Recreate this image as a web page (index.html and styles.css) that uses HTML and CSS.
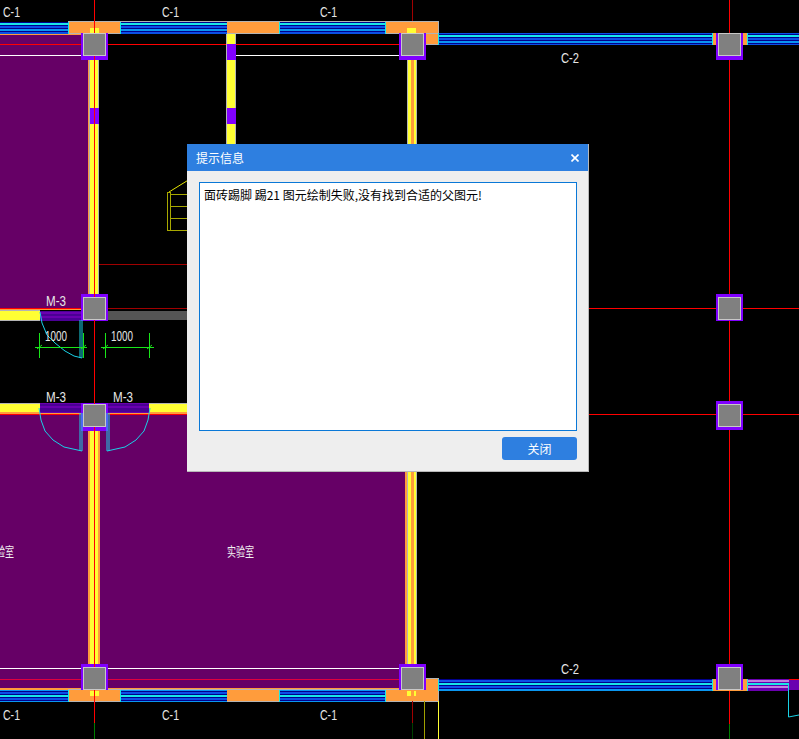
FILE: index.html
```html
<!DOCTYPE html>
<html lang="zh">
<head>
<meta charset="utf-8">
<title>提示信息</title>
<link rel="stylesheet" href="styles.css">
</head>
<body>
<main class="stage">
<svg class="cad" width="799" height="739" viewBox="0 0 799 739" shape-rendering="crispEdges">
  <defs>
    <pattern id="win" width="8" height="12" patternUnits="userSpaceOnUse">
      <rect class="dk" width="8" height="12"/>
      <rect class="cy" width="8" height="1"/>
      <rect class="bl" y="2" width="8" height="2"/>
      <rect class="lb" y="5" width="8" height="2"/>
      <rect class="bl" y="8" width="8" height="2"/>
      <rect class="cy" y="11" width="8" height="1"/>
    </pattern>
    <pattern id="door" width="8" height="10" patternUnits="userSpaceOnUse">
      <rect class="dp" width="8" height="10"/>
      <rect class="vi" y="2" width="8" height="2"/>
      <rect class="vi" y="6" width="8" height="2"/>
    </pattern>
    <pattern id="pinkwin" width="8" height="12" patternUnits="userSpaceOnUse">
      <rect class="vi" width="8" height="12"/>
      <rect class="cy" width="8" height="1"/>
      <rect class="pk" y="2" width="8" height="2"/>
      <rect class="pk" y="8" width="8" height="2"/>
      <rect class="cy" y="11" width="8" height="1"/>
    </pattern>
    <g id="col">
      <rect class="gc" x="0.5" y="0.5" width="22" height="22"/>
    </g>
  </defs>

  <!-- rooms -->
  <rect class="pu" x="0" y="35" width="88" height="273"/>
  <rect class="pu" x="0" y="415" width="88" height="273"/>
  <rect class="pu" x="100" y="415" width="305" height="273"/>
  <rect class="or" x="0" y="33" width="81" height="2"/>
  <rect class="or" x="0" y="688" width="405" height="2"/>

  <!-- axis and room lines -->
  <rect class="re" x="0" y="44" width="401" height="1"/>
  <rect class="wh" x="0" y="55" width="81" height="1"/>
  <rect class="wh" x="236" y="55" width="165" height="1"/>
  <rect class="dr" x="93" y="264" width="100" height="1"/>
  <rect class="re" x="0" y="308" width="81" height="1"/>
  <rect class="dr" x="108" y="308" width="80" height="1"/>
  <rect class="re" x="589" y="308" width="210" height="1"/>
  <rect class="re" x="589" y="414" width="210" height="1"/>
  <rect class="wh" x="0" y="668" width="401" height="1"/>
  <rect class="cr" x="0" y="679" width="401" height="1"/>
  <rect class="dr" x="412" y="0" width="1" height="22"/>
  <rect class="re" x="729" y="0" width="1" height="724"/>
  <rect class="gr" x="729" y="724" width="1" height="15"/>

  <!-- vertical walls -->
  <rect class="or" x="88" y="60" width="1" height="237"/>
  <rect class="ge" x="89" y="60" width="10" height="237"/>
  <rect class="ye" x="90" y="60" width="8" height="237"/>
  <rect class="ve" x="90" y="108" width="9" height="16"/>

  <rect class="ge" x="226" y="22" width="10" height="125"/>
  <rect class="ye" x="227" y="22" width="8" height="125"/>
  <rect class="ve" x="227" y="44" width="9" height="16"/>
  <rect class="ve" x="227" y="108" width="9" height="16"/>

  <rect class="ge" x="407" y="60" width="10" height="90"/>
  <rect class="ye" x="408" y="60" width="8" height="90"/>
  <rect class="or" x="411" y="60" width="3" height="90"/>
  <rect class="ge" x="405" y="465" width="12" height="200"/>
  <rect class="ye" x="408" y="465" width="8" height="200"/>
  <rect class="or" x="411" y="465" width="3" height="200"/>
  <rect class="or" x="405" y="465" width="2" height="200"/>

  <rect class="or" x="88" y="431" width="2" height="234"/>
  <rect class="ye" x="90" y="431" width="8" height="234"/>
  <rect class="or" x="98" y="431" width="2" height="234"/>

  <!-- horizontal walls -->
  <rect class="or" x="0" y="309" width="81" height="1"/>
  <rect class="ge" x="0" y="310" width="40" height="1"/>
  <rect class="ye" x="0" y="311" width="40" height="9"/>
  <rect class="ge" x="0" y="320" width="40" height="1"/>
  <rect class="dg" x="106" y="311" width="82" height="9"/>

  <rect class="ge" x="0" y="403" width="187" height="1"/>
  <rect class="ye" x="0" y="404" width="187" height="8"/>
  <rect class="or" x="0" y="412" width="187" height="2"/>
  <rect class="re" x="0" y="414" width="187" height="1"/>

  <!-- doors -->
  <rect class="fill-door" x="40" y="311" width="42" height="10"/>
  <rect class="fill-door" x="40" y="403" width="42" height="10"/>
  <rect class="fill-door" x="107" y="403" width="42" height="10"/>

  <!-- window bands -->
  <rect class="ge" x="68" y="21" width="371" height="13"/>
  <rect class="or" x="68" y="22" width="370" height="11"/>
  <rect class="ge" x="424" y="33" width="15" height="12"/>
  <rect class="or" x="424" y="34" width="14" height="10"/>
  <rect class="ge" x="68" y="689" width="371" height="13"/>
  <rect class="or" x="68" y="690" width="370" height="11"/>
  <rect class="ge" x="424" y="678" width="15" height="12"/>
  <rect class="or" x="424" y="679" width="14" height="11"/>

  <rect class="ye" x="90" y="28" width="9" height="5"/>
  <rect class="ye" x="407" y="28" width="9" height="5"/>
  <rect class="ye" x="90" y="691" width="9" height="5"/>
  <rect class="ye" x="407" y="691" width="9" height="5"/>
  <rect class="or" x="411" y="691" width="3" height="10"/>

  <rect class="fill-win" x="0" y="22" width="68" height="12"/>
  <rect class="fill-win" x="121" y="22" width="106" height="12"/>
  <rect class="fill-win" x="280" y="22" width="105" height="12"/>
  <rect class="fill-win" x="438" y="33" width="274" height="12"/>
  <rect class="fill-win" x="747" y="33" width="52" height="12"/>
  <rect class="fill-win" x="0" y="690" width="68" height="12"/>
  <rect class="fill-win" x="121" y="690" width="106" height="12"/>
  <rect class="fill-win" x="280" y="690" width="105" height="12"/>
  <rect class="fill-win" x="438" y="679" width="274" height="12"/>
  <rect class="fill-pink" x="748" y="679" width="41" height="12"/>
  <rect class="vi" x="789" y="679" width="10" height="11"/>
  <rect class="re" x="789" y="679" width="10" height="1"/>
  <rect class="cy" x="68" y="22" width="1" height="12"/>
  <rect class="cy" x="120" y="22" width="1" height="12"/>
  <rect class="cy" x="226" y="22" width="1" height="0"/>
  <rect class="cy" x="279" y="22" width="1" height="12"/>
  <rect class="cy" x="385" y="22" width="1" height="12"/>
  <rect class="cy" x="438" y="33" width="1" height="12"/>
  <rect class="cy" x="68" y="690" width="1" height="12"/>
  <rect class="cy" x="120" y="690" width="1" height="12"/>
  <rect class="cy" x="279" y="690" width="1" height="12"/>
  <rect class="cy" x="385" y="690" width="1" height="12"/>
  <rect class="cy" x="438" y="679" width="1" height="12"/>
  <rect class="or" x="713" y="33" width="34" height="12"/>
  <rect class="or" x="713" y="679" width="34" height="12"/>
  <rect class="cy" x="712" y="33" width="1" height="12"/>
  <rect class="cy" x="747" y="33" width="1" height="12"/>
  <rect class="cy" x="712" y="679" width="1" height="12"/>
  <rect class="cy" x="747" y="679" width="1" height="12"/>

  <!-- columns -->
  <rect class="ve" x="81" y="33" width="27" height="27"/>
  <use href="#col" x="83" y="33"/>
  <rect class="ve" x="399" y="33" width="27" height="27"/>
  <use href="#col" x="401" y="33"/>
  <rect class="ve" x="716" y="33" width="27" height="27"/>
  <use href="#col" x="718" y="33"/>
  <rect class="ve" x="81" y="294" width="27" height="27"/>
  <use href="#col" x="83" y="297"/>
  <rect class="ve" x="716" y="294" width="27" height="27"/>
  <use href="#col" x="718" y="297"/>
  <rect class="ve" x="81" y="403" width="27" height="28"/>
  <use href="#col" x="83" y="404"/>
  <rect class="ve" x="716" y="401" width="27" height="29"/>
  <use href="#col" x="718" y="404"/>
  <rect class="ve" x="81" y="664" width="27" height="26"/>
  <use href="#col" x="83" y="667"/>
  <rect class="ve" x="399" y="664" width="27" height="26"/>
  <use href="#col" x="401" y="667"/>
  <rect class="ve" x="716" y="664" width="27" height="26"/>
  <use href="#col" x="718" y="667"/>

  <!-- main axis, broken by the columns -->
  <rect class="re" x="94" y="0" width="1" height="33"/>
  <rect class="re" x="94" y="56" width="1" height="241"/>
  <rect class="re" x="94" y="320" width="1" height="84"/>
  <rect class="re" x="94" y="427" width="1" height="240"/>
  <rect class="re" x="94" y="690" width="1" height="33"/>
  <rect class="gr" x="94" y="723" width="1" height="16"/>
  <rect class="dr" x="412" y="701" width="1" height="22"/>
  <rect class="dn" x="412" y="723" width="1" height="16"/>
  <rect class="ol" x="424" y="701" width="1" height="38"/>
  <rect class="ye" x="438" y="701" width="1" height="38"/>

  <!-- stairs -->
  <g class="stairs" shape-rendering="auto">
    <rect x="167.5" y="192.5" width="3" height="38"/>
    <path d="M170 194.5H190M170 206.5H190M170 218.5H190M170 230.5H190"/>
    <path class="stair-edge" d="M169 192L190 179"/>
  </g>

  <!-- door swings -->
  <g class="swing" shape-rendering="auto">
    <path d="M40 312L42 323L47 335L55 343L65 351L74 356L82 358V320M80 358V320"/>
    <path d="M39 408L41 420L45 431L53 440L64 447L82 451V413M80 451V413"/>
    <path d="M150 408L148 420L144 431L136 440L125 447L107 451V413M109 451V413"/>
    <path d="M788.5 685V717L799 715"/>
  </g>

  <!-- dimensions -->
  <g class="dim" shape-rendering="auto">
    <path d="M35 347.5H87M39.500 333V358M83.500 333V358M37 349L42 345M81 349L86 345"/>
    <path d="M101 347.500H154M105.500 333V358M149.500 333V358M103 349L108 345M147 349L152 345"/>
  </g>

  <!-- labels -->
  <g class="label">
    <text x="3" y="17" textLength="17" lengthAdjust="spacingAndGlyphs">C-1</text>
    <text x="162" y="17" textLength="17" lengthAdjust="spacingAndGlyphs">C-1</text>
    <text x="320" y="17" textLength="17" lengthAdjust="spacingAndGlyphs">C-1</text>
    <text x="561" y="63" textLength="18" lengthAdjust="spacingAndGlyphs">C-2</text>
    <text x="46" y="306" textLength="20" lengthAdjust="spacingAndGlyphs">M-3</text>
    <text x="46" y="402" textLength="20" lengthAdjust="spacingAndGlyphs">M-3</text>
    <text x="113" y="402" textLength="20" lengthAdjust="spacingAndGlyphs">M-3</text>
    <text x="45" y="341" textLength="22" lengthAdjust="spacingAndGlyphs">1000</text>
    <text x="111" y="341" textLength="22" lengthAdjust="spacingAndGlyphs">1000</text>
    <text x="561" y="674" textLength="18" lengthAdjust="spacingAndGlyphs">C-2</text>
    <text x="3" y="720" textLength="17" lengthAdjust="spacingAndGlyphs">C-1</text>
    <text x="162" y="720" textLength="17" lengthAdjust="spacingAndGlyphs">C-1</text>
    <text x="320" y="720" textLength="17" lengthAdjust="spacingAndGlyphs">C-1</text>
    <text class="room" x="227" y="556" textLength="27" lengthAdjust="spacingAndGlyphs">实验室</text>
    <text class="room" x="-13" y="556" textLength="27" lengthAdjust="spacingAndGlyphs">实验室</text>
  </g>
</svg>

<section class="dialog" role="dialog" aria-label="提示信息">
  <header class="dialog-title">
    <h1 class="dialog-heading">提示信息</h1>
    <svg class="dialog-close" width="8" height="8" viewBox="0 0 8 8" aria-label="关闭">
      <path d="M0.500 0.500L7.500 7.500M7.500 0.500L0.500 7.500"/>
    </svg>
  </header>
  <div class="dialog-body">
    <div class="message">面砖踢脚 踢21 图元绘制失败,没有找到合适的父图元!</div>
    <div class="dialog-actions">
      <button class="close-button" type="button">关闭</button>
    </div>
  </div>
</section>
</main>
</body>
</html>
```
FILE: styles.css
```css
* { box-sizing: border-box; }

html, body {
  margin: 0;
  padding: 0;
  background: #000;
}

.stage {
  position: relative;
  width: 799px;
  height: 739px;
  overflow: hidden;
  background: #000;
}

.cad { display: block; }

.dk { fill: #00008c; }
.cy { fill: #19e6e6; }
.bl { fill: #0a50e6; }
.lb { fill: #0a96f0; }
.dp { fill: #4b0096; }
.vi { fill: #6a00b0; }
.pk { fill: #c080e0; }
.pu { fill: #660066; }
.or { fill: #ff9c3c; }
.re { fill: #ff0000; }
.dr { fill: #a00000; }
.cr { fill: #e00040; }
.wh { fill: #ffffff; }
.gr { fill: #008000; }
.dn { fill: #004000; }
.ol { fill: #a0a000; }
.ge { fill: #b4b4b4; }
.ye { fill: #ffff33; }
.ve { fill: #8000ff; }
.dg { fill: #555555; }
.gc { fill: #808080; stroke: #c8c8c8; stroke-width: 1; }
.fill-win { fill: url(#win); }
.fill-door { fill: url(#door); }
.fill-pink { fill: url(#pinkwin); }

.stairs rect, .stairs path { fill: none; stroke: #a8a800; stroke-width: 1; }
.stairs .stair-edge { stroke: #e6e600; }

.swing path { fill: none; stroke: #19d2e6; stroke-width: 1; }
.dim path { fill: none; stroke: #19e619; stroke-width: 1; }

.label text {
  font-family: "Liberation Sans", sans-serif;
  font-size: 15px;
  fill: #e6e6e6;
}
.label .room {
  font-family: "Noto Sans CJK SC", sans-serif;
  font-size: 13px;
  fill: #f0f0f0;
}

.dialog {
  position: absolute;
  left: 187px;
  top: 144px;
  width: 402px;
  height: 328px;
  display: flex;
  flex-direction: column;
  background: #eeeeee;
  border-right: 1px solid #b8b8b8;
  border-bottom: 1px solid #b8b8b8;
  font-family: "Noto Sans CJK SC", sans-serif;
}

.dialog-title {
  height: 27px;
  flex: none;
  display: flex;
  align-items: center;
  justify-content: space-between;
  padding: 0 9px;
  background: #2e7fe0;
  color: #fff;
}

.dialog-heading {
  margin: 0;
  font-size: 12px;
  font-weight: 400;
  line-height: 27px;
}

.dialog-close path {
  fill: none;
  stroke: #fff;
  stroke-width: 1.600;
}

.dialog-body {
  flex: 1;
  display: flex;
  flex-direction: column;
  padding: 11px 11px 11px 12px;
  gap: 6px;
}

.message {
  height: 249px;
  flex: none;
  padding: 4px 4px;
  background: #fff;
  border: 1px solid #0a78d7;
  color: #000;
  font-size: 12px;
  line-height: 16px;
}

.dialog-actions {
  display: flex;
  justify-content: flex-end;
}

.close-button {
  width: 75px;
  height: 23px;
  padding: 0;
  border: 0;
  border-radius: 3px;
  background: #2e7fe0;
  color: #fff;
  font-family: inherit;
  font-size: 12px;
  line-height: 23px;
}
```
